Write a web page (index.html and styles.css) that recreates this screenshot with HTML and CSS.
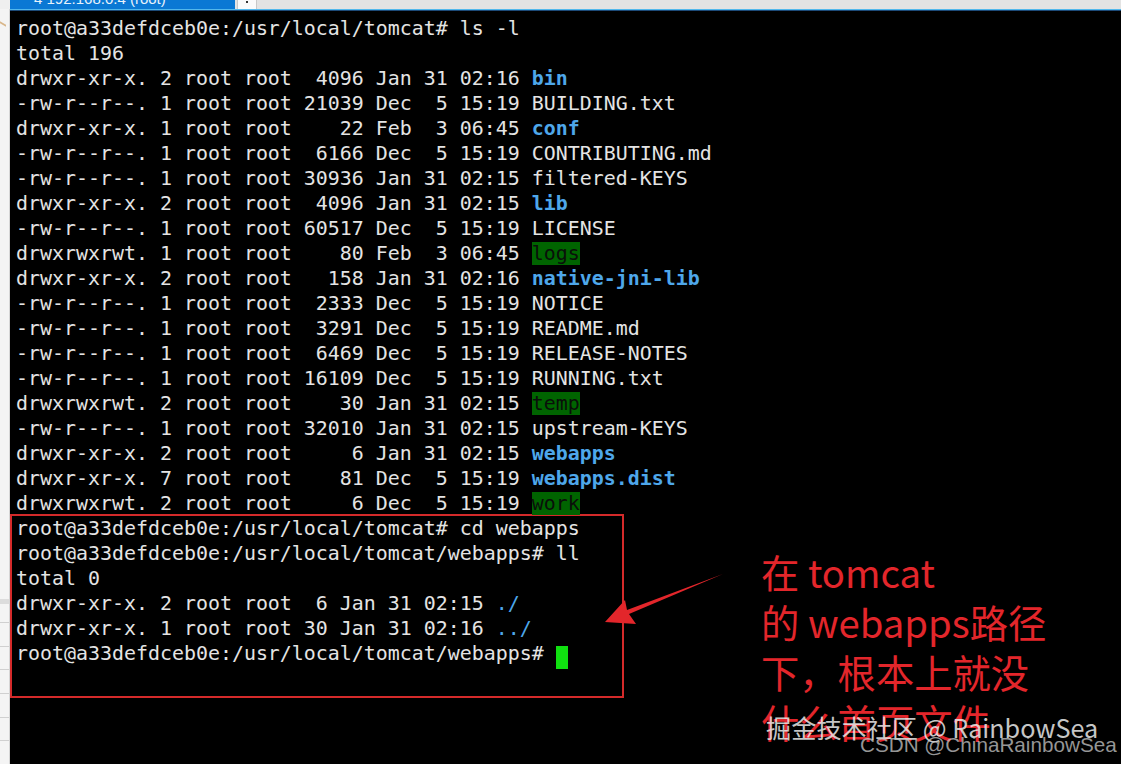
FILE: index.html
```html
<!DOCTYPE html>
<html lang="zh">
<head>
<meta charset="utf-8">
<title>terminal</title>
<link rel="stylesheet" href="styles.css">
</head>
<body>
<div class="topbar">
  <div class="gutter-top"></div>
  <div class="tab"><span class="tab-text">4 192.168.0.4 (root)</span></div>
  <div class="tab-btn"><span class="dot"></span></div>
</div>
<div class="rule"></div>
<div class="main">
  <aside class="side">
    <div class="side-icon"></div>
    <div class="side-fill"></div>
    <div class="side-band"></div>
    <div class="side-row"></div>
    <div class="side-row"></div>
    <div class="side-row"></div>
    <div class="side-row"></div>
    <div class="side-row"></div>
    <div class="side-row"></div>
  </aside>
  <section class="term">
<div class="ln">root@a33defdceb0e:/usr/local/tomcat# ls -l</div>
<div class="ln">total 196</div>
<div class="ln">drwxr-xr-x. 2 root root  4096 Jan 31 02:16 <b class="dir">bin</b></div>
<div class="ln">-rw-r--r--. 1 root root 21039 Dec  5 15:19 BUILDING.txt</div>
<div class="ln">drwxr-xr-x. 1 root root    22 Feb  3 06:45 <b class="dir">conf</b></div>
<div class="ln">-rw-r--r--. 1 root root  6166 Dec  5 15:19 CONTRIBUTING.md</div>
<div class="ln">-rw-r--r--. 1 root root 30936 Jan 31 02:15 filtered-KEYS</div>
<div class="ln">drwxr-xr-x. 2 root root  4096 Jan 31 02:15 <b class="dir">lib</b></div>
<div class="ln">-rw-r--r--. 1 root root 60517 Dec  5 15:19 LICENSE</div>
<div class="ln">drwxrwxrwt. 1 root root    80 Feb  3 06:45 <span class="ow">logs</span></div>
<div class="ln">drwxr-xr-x. 2 root root   158 Jan 31 02:16 <b class="dir">native-jni-lib</b></div>
<div class="ln">-rw-r--r--. 1 root root  2333 Dec  5 15:19 NOTICE</div>
<div class="ln">-rw-r--r--. 1 root root  3291 Dec  5 15:19 README.md</div>
<div class="ln">-rw-r--r--. 1 root root  6469 Dec  5 15:19 RELEASE-NOTES</div>
<div class="ln">-rw-r--r--. 1 root root 16109 Dec  5 15:19 RUNNING.txt</div>
<div class="ln">drwxrwxrwt. 2 root root    30 Jan 31 02:15 <span class="ow">temp</span></div>
<div class="ln">-rw-r--r--. 1 root root 32010 Jan 31 02:15 upstream-KEYS</div>
<div class="ln">drwxr-xr-x. 2 root root     6 Jan 31 02:15 <b class="dir">webapps</b></div>
<div class="ln">drwxr-xr-x. 7 root root    81 Dec  5 15:19 <b class="dir">webapps.dist</b></div>
<div class="ln">drwxrwxrwt. 2 root root     6 Dec  5 15:19 <span class="ow">work</span></div>
<div class="box">
<div class="ln">root@a33defdceb0e:/usr/local/tomcat# cd webapps</div>
<div class="ln">root@a33defdceb0e:/usr/local/tomcat/webapps# ll</div>
<div class="ln">total 0</div>
<div class="ln">drwxr-xr-x. 2 root root  6 Jan 31 02:15 <span class="dir-n">./</span></div>
<div class="ln">drwxr-xr-x. 1 root root 30 Jan 31 02:16 <span class="dir-n">../</span></div>
<div class="ln">root@a33defdceb0e:/usr/local/tomcat/webapps# <span class="cursor"> </span></div>
</div>
  </section>
</div>

<svg class="arrow" width="130" height="70" viewBox="0 0 130 70">
  <path d="M120 4 L26 44 L33 54 L2 52 L22 30 L24 40 Z" fill="#e3262b"/>
</svg>

<div class="note">
  <div class="note-ln">在 tomcat</div>
  <div class="note-ln">的 webapps路径</div>
  <div class="note-ln">下，根本上就没</div>
  <div class="note-ln">什么首页文件</div>
</div>

<div class="wm1">掘金技术社区 @ RainbowSea</div>
<div class="wm2">CSDN @ChinaRainbowSea</div>
</body>
</html>
```

FILE: styles.css
```css
html, body {
  margin: 0;
  padding: 0;
  background: #000;
  width: 1121px;
  height: 764px;
  overflow: hidden;
}

.topbar {
  display: flex;
  height: 9px;
  background: #e3e3e3;
  overflow: hidden;
}
.gutter-top {
  width: 10px;
  background: #efefef;
}
.tab {
  width: 225px;
  background: #0a78d4;
  overflow: hidden;
  padding-left: 24px;
  box-sizing: border-box;
}
.tab-text {
  display: block;
  margin-top: -9px;
  font: 15px "Liberation Sans", sans-serif;
  color: #e8f2fb;
  line-height: 16px;
}
.tab-btn {
  width: 18px;
  margin-left: 2px;
  background: #fafafa;
  border-left: 1px solid #c8c8c8;
  border-right: 1px solid #c8c8c8;
  display: flex;
  justify-content: center;
}
.dot {
  width: 2px;
  height: 2px;
  background: #333;
  margin-top: 1px;
}
.rule {
  height: 2px;
  margin-left: 10px;
  background: linear-gradient(#52b8ec 0 1px, #1c4a78 1px);
}

.main {
  display: flex;
  margin-top: -2px;
}
.side {
  width: 10px;
  height: 755px;
  background: #f4f4f4;
  border-right: 1px solid #d6d6d6;
  box-sizing: border-box;
  display: flex;
  flex-direction: column;
}
.side-icon {
  height: 10px;
  margin-top: 14px;
  width: 6px;
  border-top: 2px solid #d8b68a;
  transform: skewY(30deg);
}
.side-fill {
  height: 572px;
}
.side-band {
  height: 5px;
  background: #dcdcdc;
  margin-bottom: 18px;
}
.side-row {
  height: 24px;
  border-top: 1px solid #d0d0d0;
  box-sizing: border-box;
}

.term {
  flex: 1;
  padding: 7px 0 0 6px;
  font-family: "DejaVu Sans Mono", monospace;
  font-size: 19.93px;
  line-height: 25px;
  color: #e4e4e4;
}
.ln {
  white-space: pre;
  height: 25px;
}
.dir {
  color: #4ea7ea;
  font-weight: bold;
}
.dir-n {
  color: #4ea7ea;
}
.ow {
  background: #006400;
  color: #0a0f0a;
}
.box {
  width: 614px;
  height: 184px;
  margin: -2px 0 0 -6px;
  padding: 0 0 0 4px;
  border: 2px solid #d42a2a;
  box-sizing: border-box;
}
.cursor {
  background: #10e010;
  display: inline-block;
  width: 12px;
  height: 23px;
  vertical-align: -5px;
}

.arrow {
  position: absolute;
  left: 603px;
  top: 570px;
}

.note {
  position: absolute;
  left: 761px;
  top: 547px;
  font-family: "Noto Sans CJK SC", "Noto Sans", sans-serif;
  font-size: 38.3px;
  line-height: 50px;
  color: #e3262b;
}

.wm1 {
  position: absolute;
  left: 766px;
  top: 709px;
  font-family: "Noto Sans CJK SC", "Noto Sans", sans-serif;
  font-size: 25.2px;
  line-height: 36px;
  color: rgba(235, 235, 235, 0.85);
}
.wm2 {
  position: absolute;
  left: 860px;
  top: 731px;
  font-family: "Liberation Sans", "Noto Sans CJK SC", sans-serif;
  font-size: 20.7px;
  line-height: 28px;
  color: rgba(200, 200, 200, 0.75);
}
```
